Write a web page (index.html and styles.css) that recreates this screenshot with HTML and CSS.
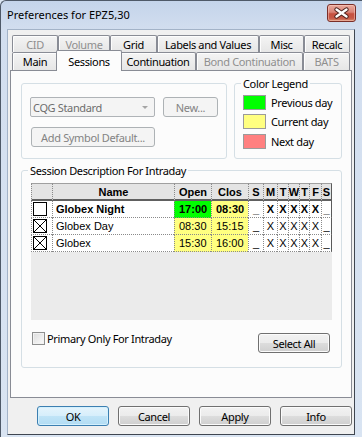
FILE: index.html
```html
<!DOCTYPE html>
<html lang="en">
<head>
<meta charset="utf-8">
<title>Preferences for EPZ5,30</title>
<link rel="stylesheet" href="styles.css">
</head>
<body>
<div class="screen">
<div class="window">
  <div class="titlebar">
    <span class="title">Preferences for EPZ5,30</span>
    <div class="close">
      <svg width="27" height="16" viewBox="0 0 27 16">
        <path d="M8.5 4.5 L18.5 11.5 M18.5 4.5 L8.5 11.5" stroke="#4a1f1a" stroke-width="4.4" stroke-linecap="round" fill="none"/>
        <path d="M8.5 4.5 L18.5 11.5 M18.5 4.5 L8.5 11.5" stroke="#ffffff" stroke-width="2.4" stroke-linecap="round" fill="none"/>
      </svg>
    </div>
  </div>
  <div class="client">
    <div class="tabrow back">
      <div class="tab dis t46">CID</div>
      <div class="tab dis t52">Volume</div>
      <div class="tab t47">Grid</div>
      <div class="tab t102">Labels and Values</div>
      <div class="tab t45">Misc</div>
      <div class="tab t46">Recalc</div>
    </div>
    <div class="tabrow front">
      <div class="tab t46">Main</div>
      <div class="tab sel">Sessions</div>
      <div class="tab t76">Continuation</div>
      <div class="tab dis t107">Bond Continuation</div>
      <div class="tab dis t47">BATS</div>
    </div>
    <div class="panel">
      <div class="toprow">
        <div class="group g-sym">
          <div class="symrow">
            <div class="combo">CQG Standard<span class="arrow"></span></div>
            <div class="btn dis new">New...</div>
          </div>
          <div class="btn dis addsym">Add Symbol Default...</div>
        </div>
        <div class="group g-legend">
          <div class="caption">Color Legend</div>
          <div class="lrow"><span class="sw prev"></span>Previous day</div>
          <div class="lrow"><span class="sw cur"></span>Current day</div>
          <div class="lrow last"><span class="sw next"></span>Next day</div>
        </div>
      </div>
      <div class="group g-session">
        <div class="caption">Session Description For Intraday</div>
        <div class="grid">
          <div class="gr head">
            <div class="c"></div>
            <div class="c">Name</div>
            <div class="c">Open</div>
            <div class="c">Clos</div>
            <div class="c">S</div>
            <div class="c">M</div>
            <div class="c">T</div>
            <div class="c">W</div>
            <div class="c">T</div>
            <div class="c">F</div>
            <div class="c">S</div>
          </div>
          <div class="gr bold">
            <div class="c cbx"><svg width="14" height="14" viewBox="0 0 14 14"><rect x="0.5" y="0.5" width="13" height="13" fill="#fff" stroke="#000"/></svg></div>
            <div class="c l">Globex Night</div>
            <div class="c t green">17:00</div>
            <div class="c t yellow">08:30</div>
            <div class="c">_</div>
            <div class="c">X</div>
            <div class="c">X</div>
            <div class="c">X</div>
            <div class="c">X</div>
            <div class="c">X</div>
            <div class="c">_</div>
          </div>
          <div class="gr">
            <div class="c cbx"><svg width="14" height="14" viewBox="0 0 14 14"><rect x="0.5" y="0.5" width="13" height="13" fill="#fff" stroke="#000"/><path d="M1 1L13 13M13 1L1 13" stroke="#000" stroke-width="1"/></svg></div>
            <div class="c l">Globex Day</div>
            <div class="c t yellow">08:30</div>
            <div class="c t yellow">15:15</div>
            <div class="c">_</div>
            <div class="c">X</div>
            <div class="c">X</div>
            <div class="c">X</div>
            <div class="c">X</div>
            <div class="c">X</div>
            <div class="c">_</div>
          </div>
          <div class="gr">
            <div class="c cbx"><svg width="14" height="14" viewBox="0 0 14 14"><rect x="0.5" y="0.5" width="13" height="13" fill="#fff" stroke="#000"/><path d="M1 1L13 13M13 1L1 13" stroke="#000" stroke-width="1"/></svg></div>
            <div class="c l">Globex</div>
            <div class="c t yellow">15:30</div>
            <div class="c t yellow">16:00</div>
            <div class="c">_</div>
            <div class="c">X</div>
            <div class="c">X</div>
            <div class="c">X</div>
            <div class="c">X</div>
            <div class="c">X</div>
            <div class="c">_</div>
          </div>
        </div>
        <div class="sfoot">
          <div class="chk"><span class="cb"></span>Primary Only For Intraday</div>
          <div class="btn selall">Select All</div>
        </div>
      </div>
    </div>
    <div class="buttons">
      <div class="btn def">OK</div>
      <div class="btn">Cancel</div>
      <div class="btn">Apply</div>
      <div class="btn">Info</div>
    </div>
  </div>
</div>
</div>
</body>
</html>
```
FILE: styles.css
```css
html, body { margin: 0; padding: 0; }
body {
  background: #dbe6f3;
  font-family: "Noto Sans", "Open Sans", sans-serif;
  font-size: 11px;
  letter-spacing: -0.35px;
  color: #000;
}
.screen { width: 362px; height: 437px; overflow: hidden; }
.window {
  width: 362px;
  box-sizing: border-box;
  border-left: 1px solid #4e5968;
  border-top: 1px solid #4e5968;
  border-top-left-radius: 6px;
  padding: 0 7px 6px 6px;
  background: linear-gradient(#c4d4ea 0, #d2deef 29px, #d9e4f2 100%);
}
.titlebar {
  height: 28px;
  display: flex;
  align-items: flex-start;
  margin-right: -7px;
  padding-right: 6px;
}
.title { line-height: 28px; letter-spacing: 0; }
.close {
  margin-left: auto;
  margin-top: 3px;
  width: 29px;
  height: 18px;
  box-sizing: border-box;
  border: 1px solid #7a2e28;
  border-radius: 3px;
  background: linear-gradient(#eaaa9d 0, #d98377 45%, #c6503f 55%, #c65846 82%, #d88a6c 100%);
  box-shadow: inset 0 0 0 1px rgba(255, 215, 205, .45);
  display: flex;
  align-items: center;
  justify-content: center;
}
.client {
  height: 406px;
  box-sizing: border-box;
  border: 1px solid;
  border-color: #a3b3c8 #3f4650 #3f4650 #a3b3c8;
  background: #f0f0f0;
  padding: 5px 2px 0;
}

/* tabs */
.tabrow { display: flex; margin-left: 2px; height: 17px; }
.tabrow.front { height: 18px; }
.tab {
  box-sizing: border-box;
  height: 100%;
  border: 1px solid #898c95;
  border-bottom: 0;
  border-radius: 2px 2px 0 0;
  background: linear-gradient(#f4f4f4, #e6e6e6);
  box-shadow: inset 1px 1px 0 #fdfdfd;
  display: flex;
  align-items: center;
  justify-content: center;
  white-space: nowrap;
}
.tab.dis { color: #8f8f8f; }
.t45 { width: 45px; } .t46 { width: 46px; } .t47 { width: 47px; }
.t52 { width: 52px; } .t76 { width: 76px; } .t102 { width: 102px; } .t107 { width: 107px; }
.tab.sel {
  position: relative;
  z-index: 2;
  width: 66px;
  height: 21px;
  margin: -2px -2px -1px;
  background: #fcfcfc;
  box-shadow: none;
}

.panel {
  position: relative;
  z-index: 1;
  height: 328px;
  box-sizing: border-box;
  border: 1px solid #898c95;
  background: #fcfcfc;
  padding: 12px 9px 0 10px;
}

/* group boxes */
.group { box-sizing: border-box; border: 1px solid #d5dfe5; border-radius: 3px; }
.toprow { display: flex; gap: 7px; }
.g-sym { width: 206px; height: 76px; padding: 13px 0 0 8px; }
.symrow { display: flex; }
.combo {
  box-sizing: border-box;
  width: 125px;
  height: 20px;
  border: 1px solid #afb3b7;
  border-radius: 2px;
  background: #f4f4f4;
  color: #6d6d6d;
  padding-left: 2px;
  display: flex;
  align-items: center;
}
.combo .arrow {
  margin-left: auto;
  margin-right: 6px;
  width: 0; height: 0;
  border-left: 3px solid transparent;
  border-right: 3px solid transparent;
  border-top: 3px solid #a5a5a5;
}
.btn {
  box-sizing: border-box;
  height: 20px;
  border: 1px solid #707070;
  border-radius: 3px;
  background: linear-gradient(#f2f2f2 0, #ebebeb 50%, #dddddd 50%, #cfcfcf 100%);
  box-shadow: inset 0 0 0 1px #fbfbfb;
  display: flex;
  align-items: center;
  justify-content: center;
  white-space: nowrap;
}
.btn.dis { border-color: #adb2b5; background: #f4f4f4; color: #838383; box-shadow: none; }
.new { width: 55px; margin-left: 8px; }
.addsym { width: 124px; margin: 10px 0 0 1px; }

.g-legend { width: 108px; height: 76px; padding-left: 8px; }
.caption {
  width: fit-content;
  margin: -8px 0 0 -2px;
  padding: 0 2px;
  line-height: 15px;
  background: #fcfcfc;
}
.lrow { display: flex; align-items: center; height: 15px; margin-top: 4px; }
.lrow.last { margin-top: 5px; }
.sw { width: 23px; height: 15px; box-sizing: border-box; border: 1px solid #9b9b9b; margin-right: 5px; }
.sw.prev { background: #00ff00; }
.sw.cur { background: #ffff80; }
.sw.next { background: #ff8080; }

.g-session { margin-top: 11px; padding: 0 0 14px 9px; }
.g-session .caption { margin-left: -3px; }

/* grid */
.grid {
  margin-top: 5px;
  width: 301px;
  height: 137px;
  background: #ebebeb;
  font-family: "Liberation Sans", Arial, sans-serif;
  font-size: 11px;
  letter-spacing: 0;
}
.gr {
  display: grid;
  grid-template-columns: 21px 122px 37px 37px 15px 14px 11px 11px 10px 12px 11px;
  height: 17px;
}
.gr.head { height: 18px; }
.c {
  box-sizing: border-box;
  border-left: 1px dotted #8a8a8a;
  border-bottom: 1px dotted #8a8a8a;
  background: #fff;
  display: flex;
  align-items: center;
  justify-content: center;
  overflow: hidden;
  white-space: nowrap;
}
.c:last-child { border-right: 1px solid #5a5a5a; }
.head .c {
  background: #e4e4e4;
  border-top: 1px solid #a0a0a0;
  border-bottom: 2px solid #606060;
  font-weight: bold;
}
.c.l { justify-content: flex-start; padding-left: 3px; }
.c.t { justify-content: flex-start; padding-left: 4px; }
.c.cbx { justify-content: flex-start; padding-left: 1px; }
.bold .c { font-weight: bold; }
.c.green { background: #00ff00; }
.c.yellow { background: #ffff80; }

.sfoot { display: flex; align-items: flex-start; margin-top: 12px; }
.chk { display: flex; align-items: center; height: 13px; margin-left: 1px; }
.cb {
  width: 13px;
  height: 13px;
  box-sizing: border-box;
  border: 1px solid #8e8f8f;
  background: linear-gradient(135deg, #dcdcdc, #fbfbfb);
  box-shadow: inset 0 0 0 1px #f2f2f2;
  margin-right: 2px;
}
.selall { width: 72px; margin: 1px 11px 0 auto; }

.buttons { display: flex; justify-content: flex-end; gap: 9px; margin-top: 8px; }
.buttons .btn { width: 72px; }
.btn.def {
  border-color: #3c7fb1;
  background: linear-gradient(#e5f4fc 0, #d6eefb 50%, #c0e4f7 50%, #b2dcf3 100%);
  box-shadow: inset 0 0 0 1px #d3f0fd;
}
```
